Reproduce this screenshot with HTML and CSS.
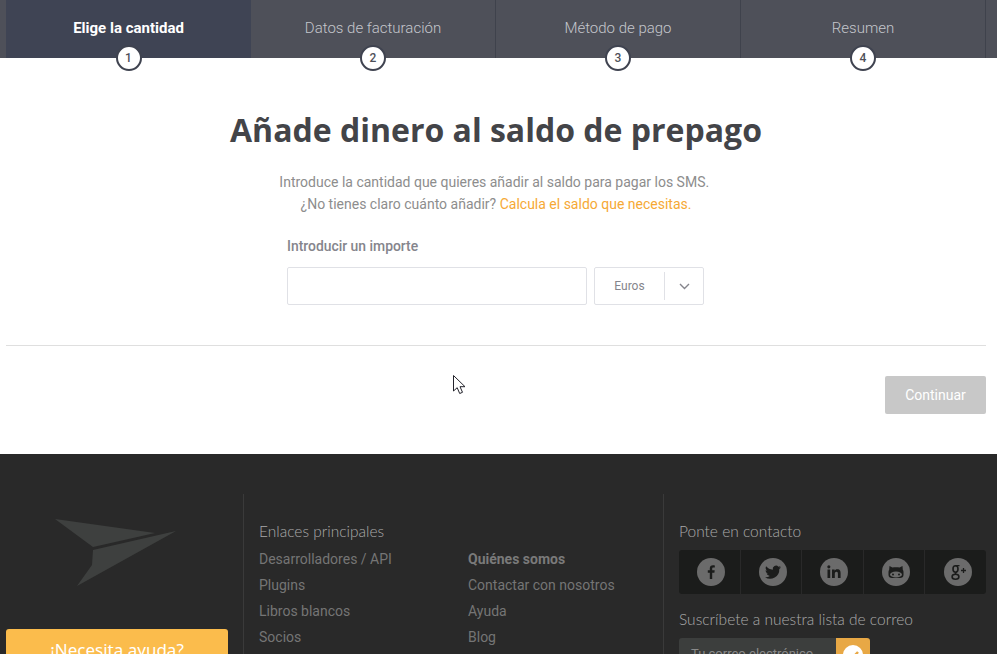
FILE: index.html
```html
<!DOCTYPE html>
<html lang="es">
<head>
    <meta charset="UTF-8">
    <meta name="viewport" content="width=device-width, initial-scale=1.0">
    <title>Añade dinero al saldo de prepago</title>
    <link rel="stylesheet" href="styles.css">
</head>
<body>
    <div class="steps">
        <div class="step step-active">Elige la cantidad<span class="step-num">1</span></div>
        <div class="step">Datos de facturación<span class="step-num">2</span></div>
        <div class="step">Método de pago<span class="step-num">3</span></div>
        <div class="step">Resumen<span class="step-num">4</span></div>
    </div>

    <main class="content">
        <h1>Añade dinero al saldo de prepago</h1>
        <p class="intro">Introduce la cantidad que quieres añadir al saldo para pagar los SMS.&nbsp;<br>¿No tienes claro cuánto añadir? <a href="#">Calcula el saldo que necesitas.</a></p>

        <form class="amount-form">
            <label for="amount">Introducir un importe</label>
            <div class="amount-row">
                <input type="text" id="amount">
                <div class="currency">
                    <span class="currency-name">Euros</span>
                    <span class="currency-arrow">
                        <svg width="11" height="7" viewBox="0 0 11 7"><path d="M1 1l4.500 4.500L10 1" fill="none" stroke="#85858c" stroke-width="1.400"/></svg>
                    </span>
                </div>
            </div>
        </form>

        <div class="actions">
            <button type="button">Continuar</button>
        </div>
    </main>

    <footer>
        <div class="footer-brand">
            <svg class="logo" width="122" height="70" viewBox="0 0 122 70">
                <path d="M0 1L100 15 38 29z" fill="#3e403f"/>
                <path d="M121 13L22 68 37 47 38 32z" fill="#3e403f"/>
            </svg>
            <a class="help-btn" href="#">¡Necesita ayuda?</a>
        </div>

        <div class="footer-links">
            <h4>Enlaces principales</h4>
            <div class="link-cols">
                <ul>
                    <li><a href="#">Desarrolladores / API</a></li>
                    <li><a href="#">Plugins</a></li>
                    <li><a href="#">Libros blancos</a></li>
                    <li><a href="#">Socios</a></li>
                </ul>
                <ul>
                    <li><a class="link-title" href="#">Quiénes somos</a></li>
                    <li><a href="#">Contactar con nosotros</a></li>
                    <li><a href="#">Ayuda</a></li>
                    <li><a href="#">Blog</a></li>
                </ul>
            </div>
        </div>

        <div class="footer-contact">
            <h4>Ponte en contacto</h4>
            <div class="social">
                <a href="#"><svg width="28" height="28" viewBox="0 0 28 28"><circle cx="14" cy="14" r="14" fill="#6b6b6b"/><path d="M15.200 21v-6.200h2.200l.3-2.500h-2.500v-1.500c0-.8.3-1.200 1.200-1.200h1.400V7.400c-.4 0-1-.1-1.800-.1-2 0-3.200 1.100-3.200 3.300v1.700h-2v2.500h2V21z" fill="#1b1c1b"/></svg></a>
                <a href="#"><svg width="28" height="28" viewBox="0 0 28 28"><circle cx="14" cy="14" r="14" fill="#6b6b6b"/><path d="M22 9.200c-.6.3-1.200.4-1.900.5.700-.4 1.200-1 1.400-1.800-.6.400-1.300.6-2.100.8a3.300 3.300 0 0 0-5.600 3c-2.700-.1-5.100-1.400-6.700-3.400-.9 1.500-.4 3.400 1 4.400-.5 0-1-.2-1.500-.4 0 1.600 1.100 3 2.600 3.300-.5.100-1 .1-1.500 0 .4 1.300 1.600 2.200 3.100 2.300A6.600 6.600 0 0 1 6 19.200a9.300 9.300 0 0 0 14.300-8.300c.7-.4 1.200-1 1.700-1.700z" fill="#1b1c1b"/></svg></a>
                <a href="#"><svg width="28" height="28" viewBox="0 0 28 28"><circle cx="14" cy="14" r="14" fill="#6b6b6b"/><path d="M7.500 11.500h2.700V20H7.500zM8.850 7.300a1.550 1.550 0 1 1 0 3.100 1.550 1.550 0 0 1 0-3.100zM12 11.500h2.600v1.200c.4-.7 1.300-1.400 2.700-1.400 2.800 0 3.300 1.800 3.300 4.200V20h-2.700v-4c0-1-.1-2.200-1.400-2.200s-1.700 1-1.700 2.100V20H12z" fill="#1b1c1b"/></svg></a>
                <a href="#"><svg width="28" height="28" viewBox="0 0 28 28"><circle cx="14" cy="14" r="14" fill="#6b6b6b"/><path d="M7.500 8l3 1.600c1.900-.5 5.100-.5 7 0l3-1.600.3 3.800c.5.700.7 1.400.7 2.200v3c0 2-1.500 3-3.500 3h-8c-2 0-3.500-1-3.500-3v-3c0-.8.200-1.500.7-2.200z" fill="#1b1c1b"/><ellipse cx="14" cy="16.500" rx="6" ry="3" fill="#6b6b6b"/><circle cx="11" cy="16.500" r="1" fill="#1b1c1b"/><circle cx="17" cy="16.500" r="1" fill="#1b1c1b"/></svg></a>
                <a href="#"><svg width="28" height="28" viewBox="0 0 28 28"><circle cx="14" cy="14" r="14" fill="#6b6b6b"/><g fill="none" stroke="#1b1c1b"><ellipse cx="11.500" cy="11" rx="2.500" ry="3.200" stroke-width="1.600"/><ellipse cx="11.500" cy="18.700" rx="3.400" ry="2.500" stroke-width="1.600"/><path d="M12.500 14l-1.500 2.200M11 7.600h4.500" stroke-width="1.400"/><path d="M19.500 10v5M17 12.500h5" stroke-width="1.300"/></g></svg></a>
            </div>
            <h4 class="newsletter-title">Suscríbete a nuestra lista de correo</h4>
            <div class="newsletter">
                <span class="newsletter-input">Tu correo electrónico</span>
                <span class="newsletter-btn"><svg width="20" height="20" viewBox="0 0 20 20"><circle cx="10" cy="10" r="10" fill="#fff"/><path d="M5 10.500l3.500 3.500L15 7" fill="none" stroke="#e8a845" stroke-width="2.500"/></svg></span>
            </div>
        </div>
    </footer>

    <svg class="cursor" width="14" height="20" viewBox="0 0 14 20"><path d="M.5.500v15.500l3.700-3.300 2.500 5.800 2.800-1.200-2.500-5.600h5z" fill="#fff" stroke="#23232b"/></svg>
</body>
</html>
```

FILE: styles.css
```css
* {
    margin: 0;
    padding: 0;
    box-sizing: border-box;
}

html, body {
    height: 654px;
    overflow: hidden;
}

body {
    position: relative;
    font-family: Roboto, sans-serif;
    background: #fff;
    color: #8a8a8f;
}

a {
    text-decoration: none;
}

/* Steps */
.steps {
    display: flex;
    height: 58px;
    padding-left: 6px;
    background: #4e5059;
}

.step {
    position: relative;
    width: 245px;
    padding-top: 19px;
    text-align: center;
    font-size: 15px;
    line-height: 18px;
    font-weight: 300;
    color: #c4c6cc;
    border-right: 1px solid #3f424c;
}

.step-active {
    background: #3f4454;
    color: #fff;
    font-weight: 700;
    border-right: none;
}

.step-num {
    position: absolute;
    left: 50%;
    top: 45px;
    width: 26px;
    height: 26px;
    margin-left: -13px;
    border: 2px solid #3f4350;
    border-radius: 50%;
    background: #fff;
    color: #4e5059;
    font-size: 12px;
    font-weight: 500;
    line-height: 22px;
    text-align: center;
}

/* Main */
.content {
    height: 396px;
    padding: 0 11px 0 6px;
    text-align: center;
}

h1 {
    padding-top: 50px;
    font-family: "Open Sans", sans-serif;
    font-size: 32px;
    line-height: 44px;
    font-weight: 700;
    color: #434448;
}

.intro {
    margin-top: 19px;
    font-size: 14px;
    line-height: 22px;
    font-weight: 400;
    color: #8d8d8d;
}

.intro a {
    color: #f6a935;
}

.amount-form {
    width: 417px;
    margin: 22px 0 0 281px;
    text-align: left;
}

label {
    display: block;
    font-size: 13.900px;
    line-height: 18px;
    font-weight: 500;
    color: #85858c;
}

.amount-row {
    display: flex;
    gap: 7px;
    margin-top: 12px;
}

input {
    width: 300px;
    height: 38px;
    border: 1px solid #e0e1e6;
    border-radius: 2px;
}

.currency {
    display: flex;
    align-items: center;
    width: 110px;
    height: 38px;
    border: 1px solid #e0e1e6;
    border-radius: 2px;
}

.currency-name {
    width: 70px;
    height: 28px;
    border-right: 1px solid #e0e1e6;
    font-size: 12px;
    line-height: 28px;
    text-align: center;
    color: #85858c;
}

.currency-arrow {
    display: flex;
    flex: 1;
    justify-content: center;
}

.actions {
    display: flex;
    justify-content: flex-end;
    margin-top: 40px;
    padding-top: 30px;
    border-top: 1px solid #dfdfdf;
}

button {
    width: 101px;
    height: 38px;
    border: none;
    border-radius: 2px;
    background: #c8c8c8;
    color: #fff;
    font-family: Roboto, sans-serif;
    font-size: 14px;
    font-weight: 400;
}

/* Footer */
footer {
    display: flex;
    height: 240px;
    padding: 40px 11px 0 6px;
    background: #292929;
}

.footer-brand {
    width: 222px;
    text-align: center;
}

.logo {
    display: block;
    margin: 24px 0 0 49px;
}

.help-btn {
    display: block;
    height: 46px;
    margin-top: 41px;
    border-radius: 3px;
    background: #fbbc4c;
    color: #fff;
    font-family: "Noto Sans", sans-serif;
    font-size: 17px;
    line-height: 42px;
}

.footer-links {
    width: 420px;
    margin-left: 15px;
    padding-left: 15px;
    border-left: 1px solid #3a3a3a;
}

h4 {
    padding-top: 27px;
    font-family: Lato, sans-serif;
    font-size: 15.500px;
    line-height: 20px;
    font-weight: 300;
    color: #a9a9a9;
}

.link-cols {
    display: flex;
    margin-top: 5px;
}

.link-cols ul {
    flex: none;
    width: 209px;
    list-style: none;
}

.link-cols li {
    height: 26px;
    font-size: 14px;
    line-height: 26px;
}

.link-cols a {
    color: #757575;
}

.link-cols a.link-title {
    font-weight: 700;
    color: #7a7a7a;
}

.footer-contact {
    flex: 1;
    padding-left: 15px;
    border-left: 1px solid #3a3a3a;
}

.social {
    display: flex;
    height: 44px;
    margin-top: 9px;
    border-radius: 3px;
    background: #1b1c1b;
}

.social a {
    display: flex;
    flex: 1;
    align-items: center;
    justify-content: center;
    padding-left: 4px;
    border-right: 1px solid #292929;
}

.social a:last-child {
    border-right: none;
}

.newsletter-title {
    padding-top: 15px;
}

.newsletter {
    display: flex;
    width: 191px;
    height: 40px;
    margin-top: 9px;
    border-radius: 3px;
    overflow: hidden;
}

.newsletter-input {
    width: 157px;
    padding: 8px 0 0 12px;
    background: #3c3e3d;
    font-size: 13px;
    color: #8a8a8a;
    white-space: nowrap;
}

.newsletter-btn {
    display: flex;
    flex: 1;
    justify-content: center;
    padding-top: 7px;
    background: #e8a845;
}

.cursor {
    position: absolute;
    left: 453px;
    top: 375px;
}
```
